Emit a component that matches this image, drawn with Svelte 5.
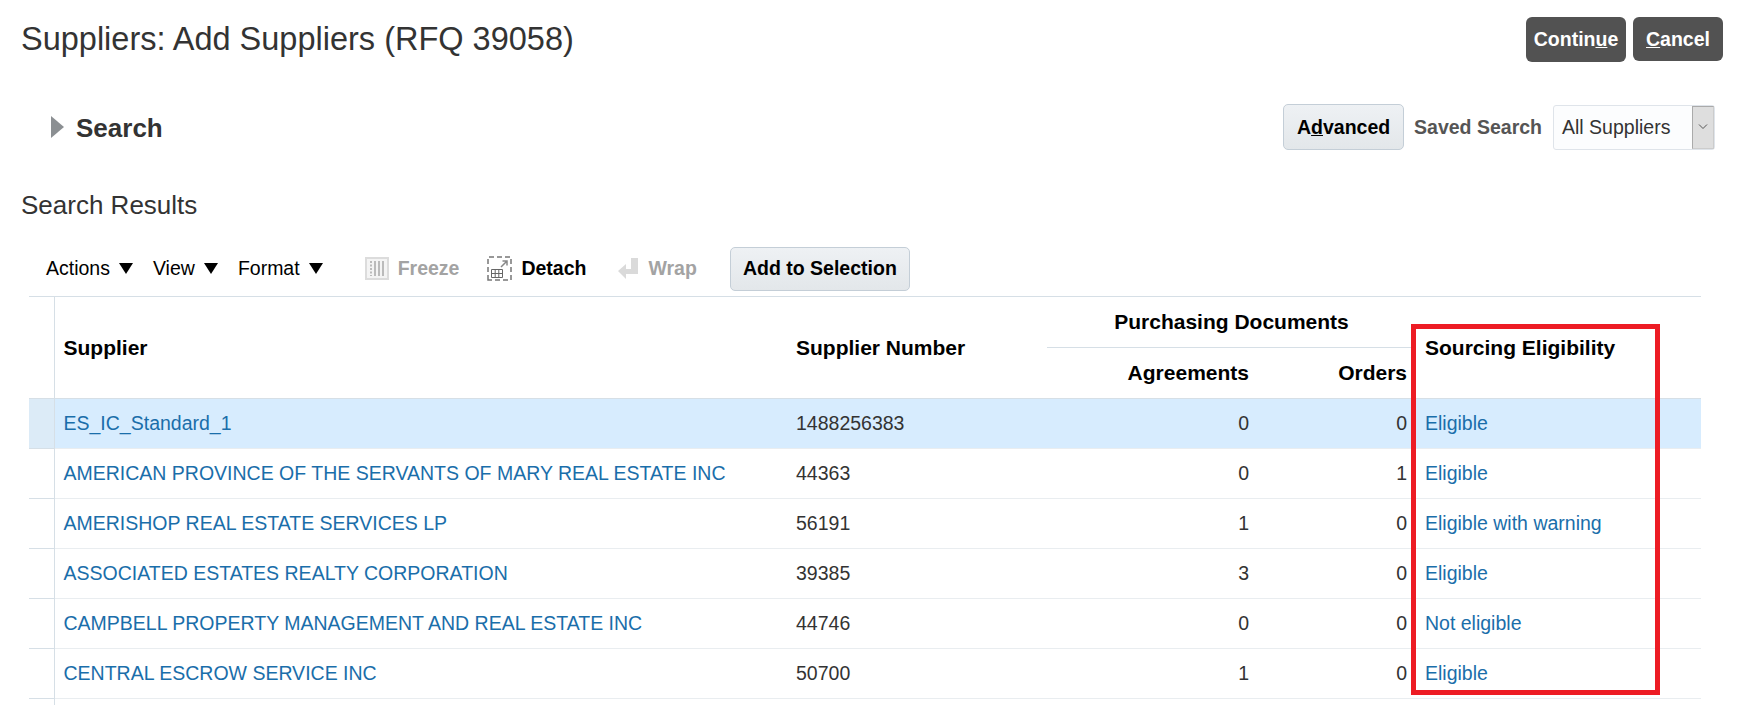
<script>
  const rows = [
    { name: 'ES_IC_Standard_1', num: '1488256383', agr: 0, ord: 0, status: 'Eligible' },
    { name: 'AMERICAN PROVINCE OF THE SERVANTS OF MARY REAL ESTATE INC', num: '44363', agr: 0, ord: 1, status: 'Eligible' },
    { name: 'AMERISHOP REAL ESTATE SERVICES LP', num: '56191', agr: 1, ord: 0, status: 'Eligible with warning' },
    { name: 'ASSOCIATED ESTATES REALTY CORPORATION', num: '39385', agr: 3, ord: 0, status: 'Eligible' },
    { name: 'CAMPBELL PROPERTY MANAGEMENT AND REAL ESTATE INC', num: '44746', agr: 0, ord: 0, status: 'Not eligible' },
    { name: 'CENTRAL ESCROW SERVICE INC', num: '50700', agr: 1, ord: 0, status: 'Eligible' }
  ];
</script>

<div class="page">
  <header class="title-bar">
    <h1>Suppliers: Add Suppliers (RFQ 39058)</h1>
    <div class="title-actions">
      <button class="dark wide">Contin<u>u</u>e</button>
      <button class="dark"><u>C</u>ancel</button>
    </div>
  </header>

  <section class="search-bar">
    <div class="search-toggle">
      <span class="arrow"></span>
      <h2>Search</h2>
    </div>
    <div class="saved">
      <button class="light adv">A<u>d</u>vanced</button>
      <span class="saved-label">Saved Search</span>
      <div class="select">
        <span class="select-value">All Suppliers</span>
        <span class="select-btn">
          <svg width="10" height="6" viewBox="0 0 10 6"><path d="M1 .5l4 4 4-4" fill="none" stroke="#555" stroke-width="1"/></svg>
        </span>
      </div>
    </div>
  </section>

  <h3>Search Results</h3>

  <div class="toolbar">
    <span class="menu">Actions <i></i></span>
    <span class="menu">View <i></i></span>
    <span class="menu">Format <i></i></span>
    <span class="tool off freeze">
      <svg width="24" height="23" viewBox="0 0 24 23">
        <rect x="1" y="1" width="22" height="21" fill="#f4f4f4" stroke="#dcdcdc" stroke-width="2"/>
        <path d="M6 4v15" stroke="#bbb" stroke-width="2" stroke-dasharray="2 1.5"/>
        <path d="M10 4v15M14 4v15M18 4v15" stroke="#bbb" stroke-width="2"/>
      </svg>
      Freeze
    </span>
    <span class="tool detach">
      <svg width="25" height="25" viewBox="0 0 25 25">
        <path d="M1 24V1H24V24H1z" fill="none" stroke="#777" stroke-width="1.5" stroke-dasharray="5 3"/>
        <path d="M14 11l6-6M15.500 5H20v4.500" fill="none" stroke="#888" stroke-width="1.500"/>
        <path d="M4.500 13.500h11v8h-11zM4.500 17.500h11M8.200 13.500v8M11.800 13.500v8" fill="none" stroke="#666"/>
      </svg>
      Detach
    </span>
    <span class="tool off wrap">
      <svg width="21" height="23" viewBox="0 0 21 23"><path d="M13 1h7v16H8v5L0 14l8-7v5h5z" fill="#dadada"/></svg>
      Wrap
    </span>
    <button class="light add">Add to Selection</button>
  </div>

  <div class="table-wrap">
    <table>
      <colgroup>
        <col style="width:25px" /><col style="width:733px" /><col style="width:260px" /><col style="width:211px" /><col style="width:158px" /><col />
      </colgroup>
      <thead>
        <tr class="h1">
          <th rowspan="2" class="gutter"></th>
          <th rowspan="2">Supplier</th>
          <th rowspan="2">Supplier Number</th>
          <th colspan="2" class="group">Purchasing Documents</th>
          <th rowspan="2">Sourcing Eligibility</th>
        </tr>
        <tr class="h2">
          <th class="num">Agreements</th>
          <th class="num">Orders</th>
        </tr>
      </thead>
      <tbody>
        {#each rows as r, i}
          <tr class:sel={i === 0}>
            <td class="gutter"></td>
            <td><span class="link">{r.name}</span></td>
            <td>{r.num}</td>
            <td class="num">{r.agr}</td>
            <td class="num">{r.ord}</td>
            <td><span class="link">{r.status}</span></td>
          </tr>
        {/each}
        <tr class="rest">
          <td class="gutter"></td><td colspan="5"></td>
        </tr>
      </tbody>
    </table>
    <div class="callout"></div>
  </div>
</div>

<style>
  :global(body) {
    margin: 0;
    background: #fff;
  }

  .page {
    height: 705px;
    overflow: hidden;
    font-family: "Liberation Sans", Arial, sans-serif;
    color: #333;
  }

  .title-bar {
    display: flex;
    justify-content: space-between;
    align-items: flex-start;
    padding: 17px 14px 0 21px;
    height: 87px;
    box-sizing: border-box;
  }

  h1 {
    margin: 0;
    font-size: 32.5px;
    font-weight: normal;
    line-height: 45px;
  }

  .title-actions {
    display: flex;
    gap: 7px;
  }

  button {
    font-family: inherit;
    font-weight: bold;
    font-size: 19.5px;
    padding: 0;
    cursor: pointer;
  }

  .dark {
    background: #525252;
    color: #fff;
    border: 0;
    border-radius: 6px;
    width: 90px;
    height: 44px;
  }

  .dark.wide {
    width: 100px;
    height: 45px;
  }

  .light {
    background: linear-gradient(#eef1f4, #e3e7ea);
    color: #000;
    border: 1px solid #c4ced7;
    border-radius: 5px;
  }

  .search-bar {
    display: flex;
    justify-content: space-between;
    align-items: center;
    padding: 17px 22px 0 51px;
    height: 46px;
  }

  .search-toggle {
    display: flex;
    align-items: center;
    gap: 12px;
  }

  .arrow {
    width: 0;
    height: 0;
    border-left: 13px solid #8b8f92;
    border-top: 11px solid transparent;
    border-bottom: 11px solid transparent;
  }

  h2 {
    margin: 2px 0 0;
    font-size: 26px;
    color: #333;
  }

  .saved {
    display: flex;
    align-items: center;
  }

  .adv {
    width: 121px;
    height: 46px;
  }

  .saved-label {
    margin: 0 11px 0 10px;
    font-size: 19.5px;
    font-weight: bold;
    color: #555;
  }

  .select {
    display: flex;
    width: 162px;
    height: 45px;
    box-sizing: border-box;
    border: 1px solid #dfe4ea;
    border-radius: 3px;
    background: #fcfdfe;
  }

  .select-value {
    flex: 1;
    padding-left: 8px;
    font-size: 19.5px;
    line-height: 43px;
  }

  .select-btn {
    width: 20px;
    background: #dedede;
    border: 1px solid #aaa;
    border-right-color: #ccc;
    border-bottom-color: #ccc;
    display: flex;
    align-items: center;
    justify-content: center;
  }

  h3 {
    margin: 0;
    padding: 41px 0 0 21px;
    font-size: 26px;
    font-weight: normal;
    line-height: 28px;
  }

  .toolbar {
    display: flex;
    align-items: center;
    margin-top: 22px;
    padding-left: 46px;
    height: 55px;
    font-size: 19.5px;
    color: #000;
  }

  .menu {
    display: flex;
    align-items: center;
    gap: 9px;
    margin-right: 20px;
  }

  .menu i {
    width: 0;
    height: 0;
    border-left: 7.5px solid transparent;
    border-right: 7.5px solid transparent;
    border-top: 11px solid #000;
  }

  .tool {
    display: flex;
    align-items: center;
    gap: 9px;
    font-weight: bold;
  }

  .tool.off {
    color: #a3a3a3;
  }

  .freeze {
    margin-left: 22px;
    margin-right: 28px;
  }

  .detach {
    margin-right: 32px;
  }

  .wrap {
    margin-right: 33px;
  }

  .add {
    width: 180px;
    height: 44px;
  }

  .table-wrap {
    position: relative;
    margin: 0 36px 0 29px;
    border-top: 1px solid #d6dfe6;
  }

  table {
    width: 100%;
    table-layout: fixed;
    border-collapse: collapse;
    font-size: 19.5px;
  }

  th {
    color: #000;
    font-size: 21px;
    text-align: left;
    padding: 0 9px;
  }

  th[rowspan] {
    padding-top: 2px;
  }

  thead tr.h1 {
    height: 50px;
  }

  thead tr.h2 {
    height: 51px;
  }

  thead tr:last-child th,
  th[rowspan] {
    border-bottom: 1px solid #d6dfe6;
  }

  th.group {
    text-align: center;
    border-bottom: 1px solid #d6dfe6;
  }

  .num {
    text-align: right;
  }

  td {
    height: 48px;
    padding: 1px 9px 0;
    border-bottom: 1px solid #e9edf0;
    color: #333;
  }

  .gutter {
    padding: 0;
    border-right: 1px solid #d6dfe6;
    border-bottom-color: #d6dfe6;
  }

  .sel td {
    background: #d7ecfe;
  }

  .sel td.gutter {
    background: #dcebf7;
  }

  .link {
    color: #1a6eaa;
  }

  .rest td {
    border-bottom: 0;
  }

  .callout {
    position: absolute;
    left: 1382px;
    top: 27px;
    width: 249px;
    height: 371px;
    box-sizing: border-box;
    border: 5px solid #ed1c24;
    pointer-events: none;
  }
</style>
